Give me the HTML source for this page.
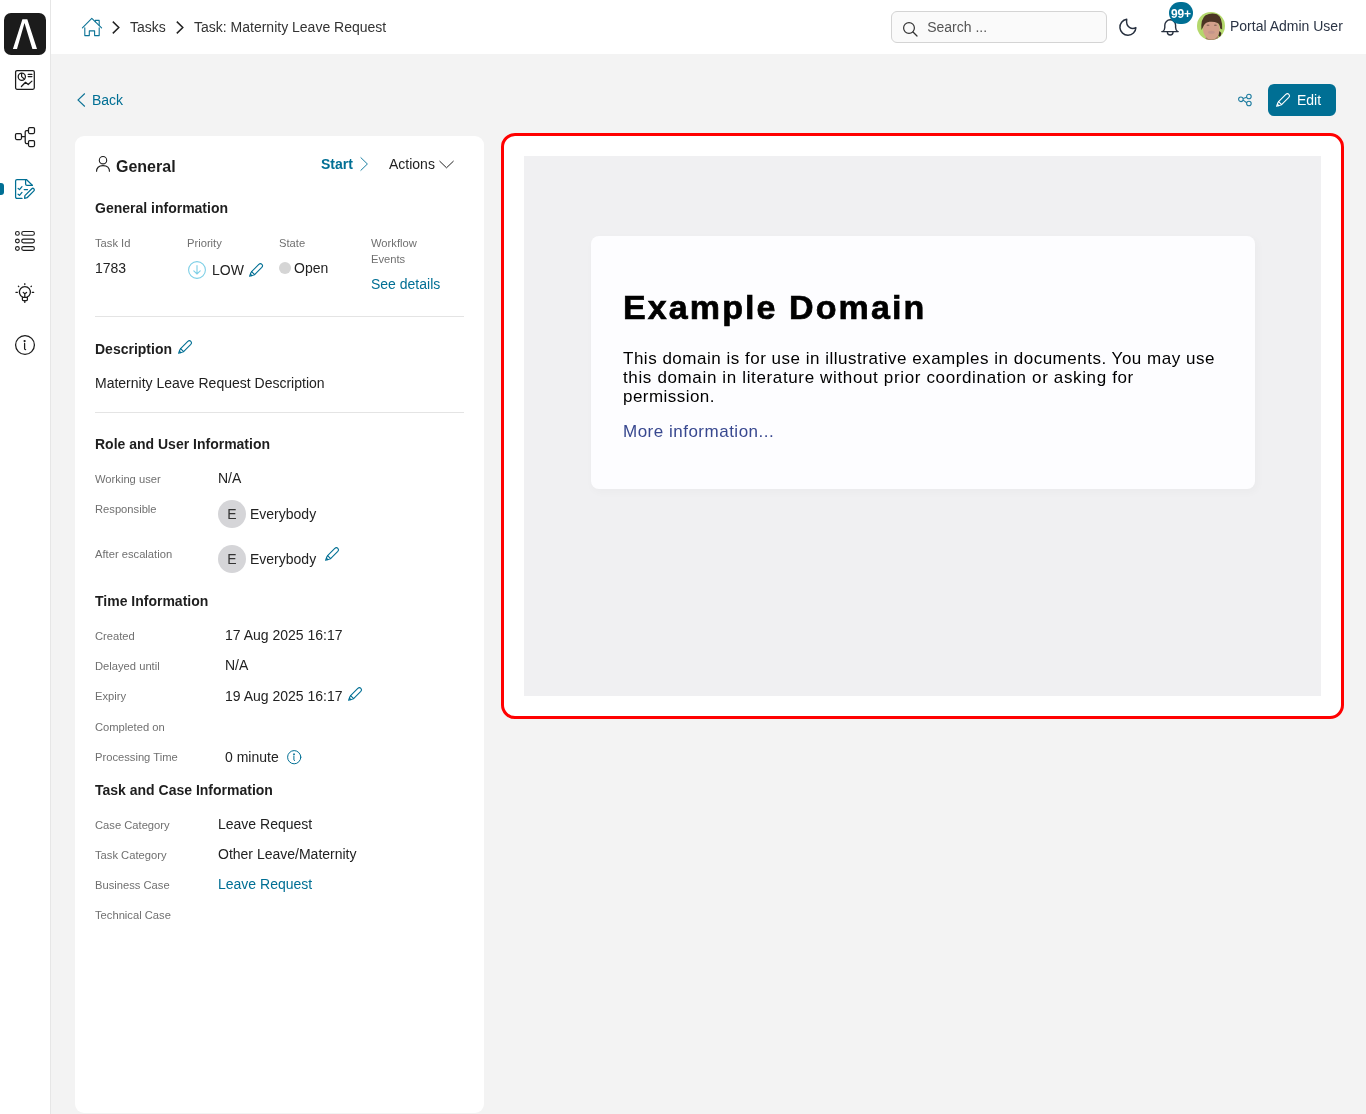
<!DOCTYPE html>
<html><head><meta charset="utf-8">
<style>
*{box-sizing:border-box;margin:0;padding:0}
html{will-change:transform}
html,body{width:1366px;height:1114px;overflow:hidden;background:#f3f3f3;font-family:"Liberation Sans",sans-serif;color:#222}
.t{position:absolute;white-space:nowrap;line-height:1}
#side{position:absolute;left:0;top:0;width:51px;height:1114px;background:#fff;border-right:1px solid #e6e6e6}
#head{position:absolute;left:51px;top:0;width:1315px;height:54px;background:#fff}
.logo{position:absolute;left:4px;top:13px;width:42px;height:42px;background:#1b1b1b;border-radius:7px}
svg{position:absolute;overflow:visible}
.lbl{font-size:11.2px;color:#707070}
.val{font-size:14px;color:#222}
.h{font-size:14px;font-weight:bold;color:#1e1e1e}
.teal{color:#006f94}
.card{position:absolute;left:75px;top:136px;width:409px;height:977px;background:#fff;border-radius:9px}
.dv{position:absolute;left:95px;width:369px;height:1px;background:#e4e4e4}
.av{position:absolute;width:28px;height:28px;border-radius:50%;background:#d5d5d8;color:#333;font-size:14px;text-align:center;line-height:28px}
</style></head>
<body>
<svg width="0" height="0" style="position:absolute"><defs><g id="pen"><path d="M2.6 8.6 L9.8 1.4 Q11.4 -0.1 12.9 1.3 Q14.3 2.8 12.8 4.4 L5.6 11.6 Z"/><path d="M2.6 8.6 Q1.3 10.4 0.6 13.3 Q3.6 12.8 5.6 11.6"/><path d="M1.6 11.2 Q1.8 12.6 3.0 12.4" stroke-width="1.4"/></g></defs></svg>
<div id="side">
  <div class="logo"><svg width="42" height="42" style="left:0;top:0"><path d="M8.9 35.9 H13 L20.5 10.1 L28.4 35.9 H33 L23.3 6.3 H18.4 Z" fill="#fff"/></svg></div>
  <!-- dashboard -->
  <svg width="20" height="20" style="left:15px;top:70px" fill="none" stroke="#1b1b1b" stroke-width="1.25" stroke-linecap="round" stroke-linejoin="round">
    <rect x="0.6" y="0.6" width="18.7" height="18.7" rx="1.5"/>
    <circle cx="6.8" cy="6.8" r="3.6"/>
    <path d="M6.6 3.3 V6.6 L9.6 9.2"/>
    <path d="M13.2 4.4 H16.9 M13.2 6.6 H16.9"/>
    <path d="M6.4 16.5 L10.5 12.3 L13.2 14.5 L16.9 11.1"/>
  </svg>
  <!-- process -->
  <svg width="20" height="20" style="left:15px;top:127px" fill="none" stroke="#1b1b1b" stroke-width="1.25" stroke-linejoin="round">
    <rect x="0.5" y="6.5" width="6" height="6" rx="1.2"/>
    <rect x="13.5" y="0.5" width="6" height="6" rx="1.2"/>
    <rect x="13.5" y="13.5" width="6" height="6" rx="1.2"/>
    <path d="M6.5 9.5 H10.2 M13.5 3.5 H11.5 Q10.2 3.5 10.2 4.8 V14.2 Q10.2 16.5 11.5 16.5 H13.5"/>
  </svg>
  <!-- task -->
  <div style="position:absolute;left:0;top:183px;width:4px;height:12px;background:#006f94;border-radius:0 3px 3px 0"></div>
  <svg width="20" height="20" style="left:15px;top:179px" fill="none" stroke="#006f94" stroke-width="1.25" stroke-linecap="round" stroke-linejoin="round">
    <path d="M7 19.4 H2 Q0.6 19.4 0.6 18 V2 Q0.6 0.5 2 0.5 H11.4 L17.3 6.3"/>
    <path d="M10.6 0.8 V5 Q10.6 6.3 12 6.3 H17.3"/>
    <path d="M3.1 9.4 L4.5 10.6 L7 7.7 M3.1 15.2 L4.5 16.4 L7 13.4"/>
    <path d="M9.2 10.5 H12.5"/>
    <path d="M9.6 19.3 L9.9 16.6 L16.8 9.7 Q17.9 8.8 18.9 9.8 Q19.9 10.9 18.9 11.9 L12.1 18.7 Z"/>
  </svg>
  <!-- list -->
  <svg width="20" height="20" style="left:15px;top:231px" fill="none" stroke="#1b1b1b" stroke-width="1.1">
    <circle cx="2.4" cy="2.4" r="1.9"/><circle cx="2.4" cy="10" r="1.9"/><circle cx="2.4" cy="17.5" r="1.9"/>
    <rect x="6.7" y="0.55" width="12.7" height="3.7" rx="1.85"/><rect x="6.7" y="8.15" width="12.7" height="3.7" rx="1.85"/><rect x="6.7" y="15.65" width="12.7" height="3.7" rx="1.85"/>
  </svg>
  <!-- bulb -->
  <svg width="20" height="20" style="left:15px;top:283px" fill="none" stroke="#1b1b1b" stroke-width="1.25" stroke-linecap="round" stroke-linejoin="round">
    <path d="M7.6 14.1 A5.5 5.5 0 1 1 12.2 14.1"/>
    <path d="M7.4 14.4 H12.4 V16.6 Q12.4 17.6 11.4 17.6 H8.4 Q7.4 17.6 7.4 16.6 Z"/>
    <path d="M8.2 9.4 L9.8 10.8 L11.6 9.4 M9.8 10.8 V14.2"/>
    <path d="M9.8 18 V19.4 M9.8 0.6 V1.6 M3.4 3.2 L3.8 3.6 M16.4 3.2 L16 3.6 M0.9 9.3 H2.4 M17.2 9.3 H18.7"/>
  </svg>
  <!-- info -->
  <svg width="20" height="20" style="left:15px;top:335px" fill="none" stroke="#1b1b1b" stroke-width="1.25" stroke-linecap="round">
    <circle cx="10" cy="10" r="9.4"/>
    <path d="M9.6 8.4 V13.8 Q9.6 14.6 10.6 14.6"/>
    <circle cx="9.6" cy="6" r="0.5" fill="#1b1b1b"/>
  </svg>
</div>

<div id="head">
</div>
<!-- breadcrumb -->
<svg width="20" height="18" style="left:82px;top:18px" fill="none" stroke="#0d7396" stroke-width="1.1" stroke-linejoin="round" stroke-linecap="round">
  <path d="M0.4 9.8 L9.8 0.4 L19.6 9.8"/>
  <path d="M13.3 3.7 V2.4 H17.2 V7.2"/>
  <path d="M2.8 9.8 V17.6 H7.3 V12.9 H12.6 V17.6 H17.2 V9.8"/>
</svg>
<svg width="8" height="13" style="left:112px;top:21px" fill="none" stroke="#222" stroke-width="1.5"><path d="M0.8 0.6 L6.8 6.5 L0.8 12.4"/></svg>
<div class="t" style="left:130px;top:20px;font-size:14px;color:#333">Tasks</div>
<svg width="8" height="13" style="left:176px;top:21px" fill="none" stroke="#222" stroke-width="1.5"><path d="M0.8 0.6 L6.8 6.5 L0.8 12.4"/></svg>
<div class="t" style="left:194px;top:20px;font-size:14px;color:#333">Task: Maternity Leave Request</div>

<!-- search -->
<div style="position:absolute;left:891px;top:11px;width:216px;height:32px;border:1px solid #d4d4d4;border-radius:6px;background:#fafafa"></div>
<svg width="15" height="15" style="left:903px;top:22px" fill="none" stroke="#333" stroke-width="1.2" stroke-linecap="round"><circle cx="6" cy="6" r="5.4"/><path d="M10 10 L14 14"/></svg>
<div class="t" style="left:927.2px;top:20px;font-size:14px;color:#555">Search ...</div>
<!-- moon -->
<svg width="18" height="18" style="left:1119px;top:18px" fill="none" stroke="#27303f" stroke-width="1.45" stroke-linejoin="round"><path d="M7.7 1.3 A8 8 0 1 0 16.9 9.6 C13 11.6 6.6 9.6 7.7 1.3 Z"/></svg>
<!-- bell -->
<svg width="18" height="18" style="left:1161px;top:18px" fill="none" stroke="#27303f" stroke-width="1.4" stroke-linejoin="round" stroke-linecap="round"><path d="M0.8 13.6 H17.2 M1.6 13.6 Q3.8 12.4 3.8 9.6 V7.2 A5.4 5.4 0 0 1 14.6 7.2 V9.6 Q14.6 12.4 16.8 13.6"/><path d="M6.4 14.2 A2.8 2.8 0 0 0 12 14.2"/></svg>
<div style="position:absolute;left:1169px;top:2px;width:24px;height:22px;border-radius:11px;background:#006f94"></div>
<div class="t" style="left:1169px;top:8px;width:24px;text-align:center;font-size:12px;font-weight:bold;color:#fff;letter-spacing:-0.2px">99+</div>
<!-- avatar -->
<svg width="28" height="28" style="left:1197px;top:12px"><defs><clipPath id="avc"><circle cx="14" cy="14" r="14"/></clipPath></defs>
<g clip-path="url(#avc)">
<rect width="28" height="28" fill="#b4d86c"/>
<path d="M8 28 L9.5 24 L21 24 L22 28 Z" fill="#a07c64"/>
<ellipse cx="14.4" cy="17.6" rx="8.4" ry="10" fill="#d2a08a"/>
<path d="M4.4 18 Q3.6 6.6 8.6 3.2 Q14 0.2 20 2.2 Q25.6 4.8 25.2 17.6 L23.2 16.6 Q22.8 12 20.6 11 Q17 9.2 12.6 9.8 Q8.2 10.6 6.8 13.6 Q6 15.6 4.4 18 Z" fill="#4b3424"/>
<ellipse cx="11" cy="13.2" rx="1.5" ry="0.8" fill="#8c6c5c"/><ellipse cx="18.4" cy="13.2" rx="1.5" ry="0.8" fill="#8c6c5c"/>
<ellipse cx="14.4" cy="20.3" rx="3.3" ry="1.5" fill="#c4958a"/>
<path d="M22.4 19 L24.4 21 L23.4 25 L21.4 24 Z" fill="#3a2a20"/>
</g></svg>
<div class="t" style="left:1230px;top:19px;font-size:14px;color:#2b3445">Portal Admin User</div>

<!-- back -->
<svg width="9" height="14" style="left:77px;top:93px" fill="none" stroke="#0d7396" stroke-width="1.1"><path d="M7.8 0.5 L1 7 L7.8 13.5"/></svg>
<div class="t teal" style="left:92px;top:93px;font-size:14px">Back</div>
<!-- share -->
<svg width="14" height="14" style="left:1238px;top:93px" fill="none" stroke="#1a7a9e" stroke-width="1.05"><circle cx="2.9" cy="6.3" r="2.3"/><circle cx="10.9" cy="3.5" r="2.3"/><circle cx="10.9" cy="10.5" r="2.3"/><path d="M5.07 5.54 L8.73 4.26 M5.07 7.06 L8.73 9.74"/></svg>
<!-- edit -->
<div style="position:absolute;left:1268px;top:84px;width:68px;height:32px;border-radius:6px;background:#006f94"></div>
<svg width="14" height="14" style="left:1276px;top:93px" fill="none" stroke="#fff" stroke-width="1.1" stroke-linejoin="round" stroke-linecap="round"><use href="#pen"/></svg>
<div class="t" style="left:1297px;top:93px;font-size:14px;color:#fff">Edit</div>

<!-- left card -->
<div class="card"></div>
<svg width="15" height="16" style="left:96px;top:156px" fill="none" stroke="#1e1e1e" stroke-width="1.1"><circle cx="7" cy="4.2" r="3.7"/><path d="M0.5 15.8 Q0.5 9.6 7 9.6 Q13.5 9.6 13.5 15.8"/></svg>
<div class="t" style="left:116px;top:159px;font-size:16px;font-weight:bold;color:#1e1e1e">General</div>
<div class="t teal" style="left:321px;top:157px;font-size:14px;font-weight:bold">Start</div>
<svg width="9" height="14" style="left:360px;top:157px" fill="none" stroke="#1a7fa3" stroke-width="1"><path d="M0.6 0.4 L7.4 7 L0.6 13.6"/></svg>
<div class="t" style="left:389px;top:157px;font-size:14px;color:#222">Actions</div>
<svg width="16" height="9" style="left:439px;top:160px" fill="none" stroke="#222" stroke-width="1"><path d="M0.5 1 L7.5 7.8 L14.6 1"/></svg>

<div class="t h" style="left:95px;top:201px">General information</div>
<div class="t lbl" style="left:95px;top:238px">Task Id</div>
<div class="t lbl" style="left:187px;top:238px">Priority</div>
<div class="t lbl" style="left:279px;top:238px">State</div>
<div class="t lbl" style="left:371px;top:239px;line-height:16px;top:235px">Workflow<br>Events</div>
<div class="t val" style="left:95px;top:261px">1783</div>
<svg width="18" height="18" style="left:188px;top:261px" fill="none" stroke="#7dcfe6" stroke-width="1.1" stroke-linecap="round"><circle cx="9" cy="9" r="8.4"/><path d="M9 4.6 V12.8 M5.8 9.8 L9 13 L12.2 9.8"/></svg>
<div class="t val" style="left:212px;top:263px">LOW</div>
<svg width="15" height="14" style="left:248.5px;top:263px" fill="none" stroke="#006f94" stroke-width="1.1" stroke-linejoin="round" stroke-linecap="round"><use href="#pen"/></svg>
<div style="position:absolute;left:279px;top:262px;width:12px;height:12px;border-radius:50%;background:#d5d5d5"></div>
<div class="t val" style="left:294px;top:261px">Open</div>
<div class="t teal" style="left:371px;top:277px;font-size:14px">See details</div>
<div class="dv" style="top:316px"></div>

<div class="t h" style="left:95px;top:342px">Description</div>
<svg width="15" height="14" style="left:178px;top:340px" fill="none" stroke="#006f94" stroke-width="1.1" stroke-linejoin="round" stroke-linecap="round"><use href="#pen"/></svg>
<div class="t val" style="left:95px;top:376px">Maternity Leave Request Description</div>
<div class="dv" style="top:412px"></div>

<div class="t h" style="left:95px;top:437px">Role and User Information</div>
<div class="t lbl" style="left:95px;top:474px">Working user</div>
<div class="t val" style="left:218px;top:471px">N/A</div>
<div class="t lbl" style="left:95px;top:504px">Responsible</div>
<div class="av" style="left:218px;top:500px">E</div>
<div class="t val" style="left:250px;top:507px">Everybody</div>
<div class="t lbl" style="left:95px;top:549px">After escalation</div>
<div class="av" style="left:218px;top:545px">E</div>
<div class="t val" style="left:250px;top:552px">Everybody</div>
<svg width="15" height="14" style="left:325px;top:546.5px" fill="none" stroke="#006f94" stroke-width="1.1" stroke-linejoin="round" stroke-linecap="round"><use href="#pen"/></svg>

<div class="t h" style="left:95px;top:594px">Time Information</div>
<div class="t lbl" style="left:95px;top:631px">Created</div>
<div class="t val" style="left:225px;top:628px">17 Aug 2025 16:17</div>
<div class="t lbl" style="left:95px;top:661px">Delayed until</div>
<div class="t val" style="left:225px;top:658px">N/A</div>
<div class="t lbl" style="left:95px;top:691px">Expiry</div>
<div class="t val" style="left:225px;top:689px">19 Aug 2025 16:17</div>
<svg width="15" height="14" style="left:348px;top:687px" fill="none" stroke="#006f94" stroke-width="1.1" stroke-linejoin="round" stroke-linecap="round"><use href="#pen"/></svg>
<div class="t lbl" style="left:95px;top:722px">Completed on</div>
<div class="t lbl" style="left:95px;top:752px">Processing Time</div>
<div class="t val" style="left:225px;top:750px">0 minute</div>
<svg width="15" height="15" style="left:287px;top:750px" fill="none" stroke="#006f94" stroke-width="1" stroke-linecap="round"><circle cx="7.2" cy="7.2" r="6.6"/><path d="M6.9 5.9 V9.9 Q6.9 10.5 7.6 10.5"/><circle cx="6.9" cy="4.2" r="0.4" fill="#006f94"/></svg>

<div class="t h" style="left:95px;top:783px">Task and Case Information</div>
<div class="t lbl" style="left:95px;top:820px">Case Category</div>
<div class="t val" style="left:218px;top:817px">Leave Request</div>
<div class="t lbl" style="left:95px;top:850px">Task Category</div>
<div class="t val" style="left:218px;top:847px">Other Leave/Maternity</div>
<div class="t lbl" style="left:95px;top:880px">Business Case</div>
<div class="t teal" style="left:218px;top:877px;font-size:14px">Leave Request</div>
<div class="t lbl" style="left:95px;top:910px">Technical Case</div>

<!-- right panel -->
<div style="position:absolute;left:501px;top:133px;width:843px;height:586px;border:3px solid #ff0000;border-radius:14px;background:#fff"></div>
<div style="position:absolute;left:524px;top:156px;width:797px;height:540px;background:#f0f0f2;overflow:hidden">
  <div style="position:absolute;left:67px;top:80px;width:664px;height:253px;background:#fdfdff;border-radius:8px;box-shadow:2px 3px 7px 2px rgba(0,0,0,0.02)"></div>
  <div class="t" style="left:99px;top:133.5px;font-size:34px;font-weight:bold;color:#000;letter-spacing:2.1px;-webkit-text-stroke:0.7px #000">Example Domain</div>
  <div class="t" style="left:99px;top:194px;font-size:17px;color:#000;letter-spacing:0.51px">This domain is for use in illustrative examples in documents. You may use</div>
  <div class="t" style="left:99px;top:213px;font-size:17px;color:#000;letter-spacing:0.64px">this domain in literature without prior coordination or asking for</div>
  <div class="t" style="left:99px;top:232px;font-size:17px;color:#000;letter-spacing:0.45px">permission.</div>
  <div class="t" style="left:99px;top:267px;font-size:17px;color:#38488f;letter-spacing:0.5px">More information...</div>
</div>
</body></html>
